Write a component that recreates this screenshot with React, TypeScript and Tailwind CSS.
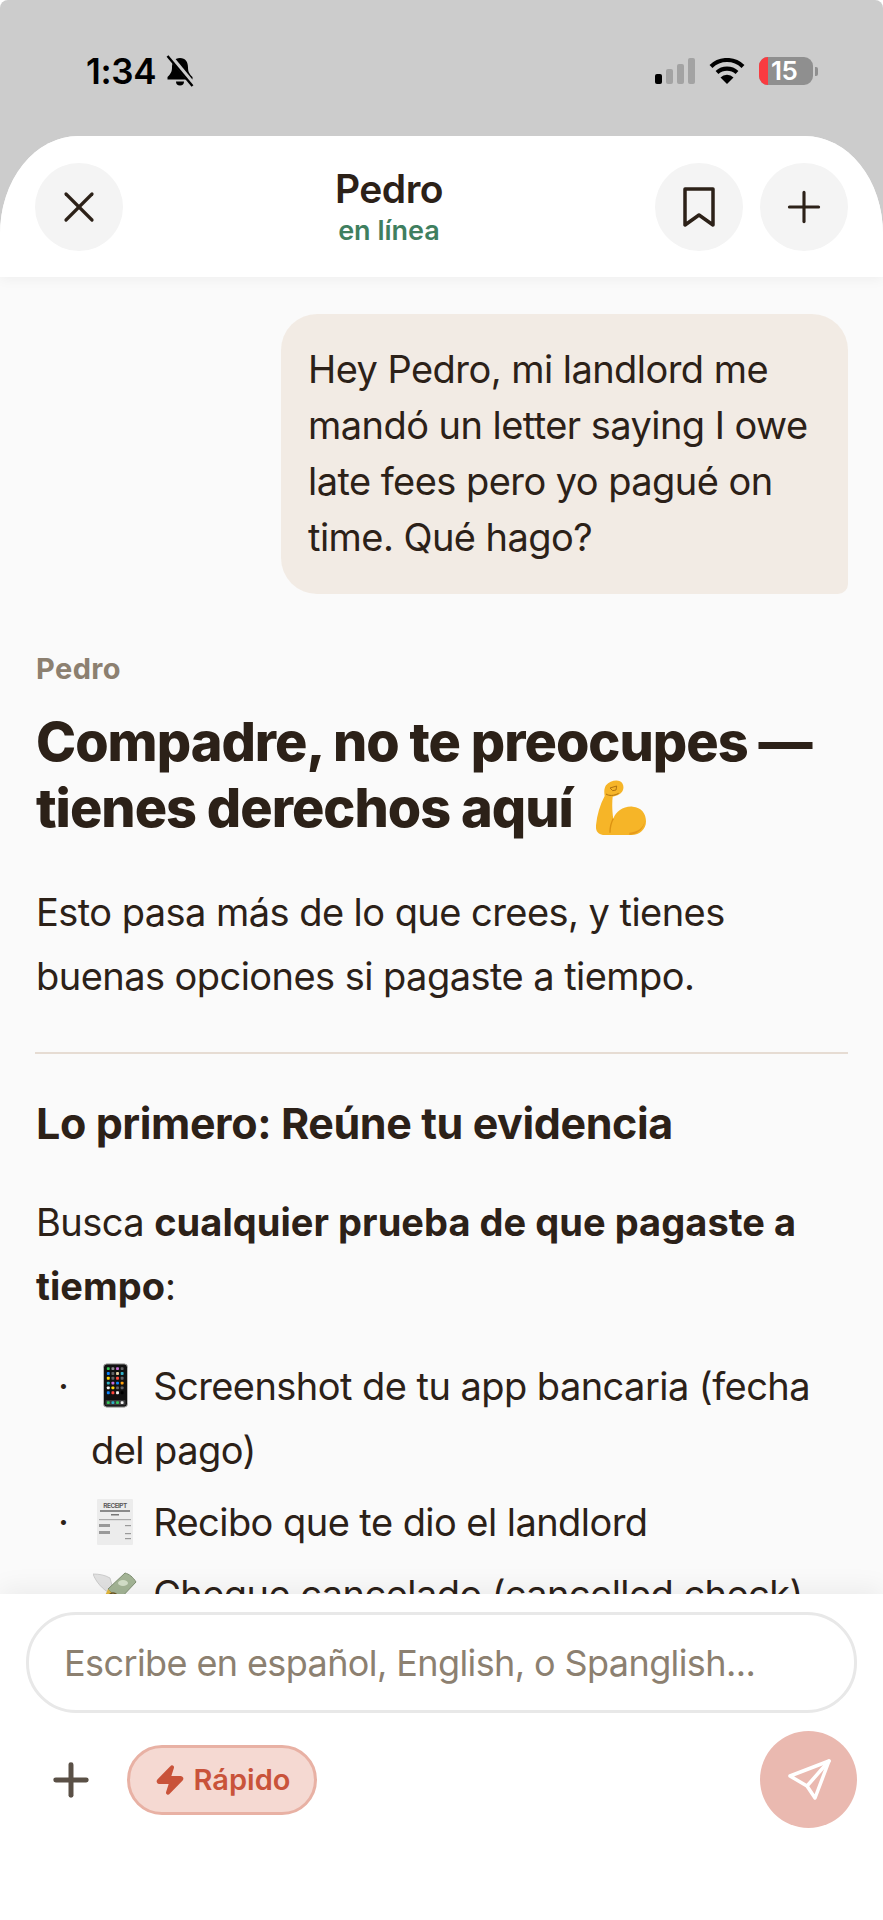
import { Plus, X, Zap } from 'lucide-react'

const sans = 'font-["Inter",sans-serif]'

function SilentBell() {
  return (
    <svg width="30" height="32" viewBox="0 0 30 32" className="ml-[9px]">
      <path d="M15 3c-5.500 0-8 4-8 9.500 0 4.500-1.500 6.500-4.500 9.500v2.500h25V22c-3-3-4.500-5-4.500-9.500C23 7 20.500 3 15 3z" fill="#000" />
      <path d="M11 26.500a4 4 0 0 0 8 0z" fill="#000" />
      <path d="M4 0l24 29" stroke="#ccc" strokeWidth="5" />
      <path d="M2.500 1l25 30" stroke="#000" strokeWidth="2.400" />
    </svg>
  )
}

function Signal() {
  return (
    <div className="flex items-end gap-[4px]">
      <div className="h-[10px] w-[7px] rounded-[2px] bg-black" />
      <div className="h-[15px] w-[7px] rounded-[2px] bg-[#a3a3a3]" />
      <div className="h-[20px] w-[7px] rounded-[2px] bg-[#a3a3a3]" />
      <div className="h-[26px] w-[7px] rounded-[2px] bg-[#a3a3a3]" />
    </div>
  )
}

function Wifi() {
  return (
    <svg width="36" height="26" viewBox="0 0 36 26">
      <path d="M2 8.500a23 23 0 0 1 32 0" fill="none" stroke="#000" strokeWidth="4.200" />
      <path d="M8 14.500a15 15 0 0 1 20 0" fill="none" stroke="#000" strokeWidth="4.200" />
      <path d="M18 26l-6.500-6.500a9 9 0 0 1 13 0z" fill="#000" />
    </svg>
  )
}

function Battery() {
  return (
    <div className="flex items-center">
      <div className="flex h-[28px] w-[54px] items-center rounded-[9px] bg-[#8f8f8f]">
        <div className="h-full w-[9px] rounded-l-[9px] bg-[#fa3b40]" />
        <span className={`${sans} ml-[3px] text-[26px] font-semibold leading-none tracking-[-0.5px] text-white`}>15</span>
      </div>
      <div className="ml-[2px] h-[9px] w-[3px] rounded-r-[2px] bg-[#8f8f8f]" />
    </div>
  )
}

function RoundButton({ children }: { children: React.ReactNode }) {
  return <button className="flex h-[88px] w-[88px] items-center justify-center rounded-full bg-[#f4f4f4]">{children}</button>
}

function BookmarkIcon() {
  return (
    <svg width="50" height="50" viewBox="0 0 50 50" fill="none" stroke="currentColor" strokeWidth="3.500" strokeLinejoin="round">
      <path d="M11 7h28v36L25 33 11 43z" />
    </svg>
  )
}

function Muscle() {
  return (
    <svg width="50" height="55" viewBox="0 0 150 165" className="ml-[12px] inline-block align-[-8px]">
      <path
        d="M30 16C40 4 60-2 72 4c10 5 13 18 8 28-4 9-16 15-30 18-2 18-2 42 2 66 8-22 30-38 58-36 26 2 40 20 40 44 0 24-18 41-44 41H26C8 165-2 154 0 136c3-32 12-62 26-88-2-12-2-22 4-32z"
        fill="#f6b528"
      />
      <path d="M52 116c-8 14-10 28-10 42" fill="none" stroke="#dc9312" strokeWidth="4" />
      <path d="M100 158c26-2 42-14 46-34-2 22-18 38-46 41z" fill="#e69a1c" />
      <path d="M42 24l20-6-2 12-10 2zM30 42c8 6 24 6 38-2" fill="none" stroke="#b07210" strokeWidth="3" />
    </svg>
  )
}

function PhoneEmoji() {
  const colors = ['#34c759', '#8e8e93', '#c86dd7', '#636366', '#0a84ff', '#636366', '#e5d3a5', '#30b0c7', '#ffd60a', '#636366', '#ff453a', '#636366', '#30b0c7', '#c86dd7', '#0a84ff', '#ff9f0a', '#f2f2f2', '#ffd60a', '#636366', '#636366', '#0a84ff', '#ff453a', '#f2f2f2', '#000']
  return (
    <svg width="25" height="45" viewBox="0 0 26 46" className="ml-[12px] mr-[11px] inline-block align-[-8px]">
      <rect x="0.500" y="0.500" width="25" height="45" rx="3.500" fill="#111" stroke="#b9b9b9" />
      {colors.map((c, i) => (
        <rect key={i} x={4 + (i % 4) * 4.800} y={4 + Math.floor(i / 4) * 5} width="3" height="3" rx="0.800" fill={c} />
      ))}
      <rect x="2.500" y="38" width="21" height="5.500" rx="1" fill="#3a3a3c" />
      <rect x="4" y="39.300" width="3" height="3" rx="0.800" fill="#34c759" />
      <rect x="8.800" y="39.300" width="3" height="3" rx="0.800" fill="#30b0c7" />
      <rect x="13.600" y="39.300" width="3" height="3" rx="0.800" fill="#34c759" />
      <rect x="18.400" y="39.300" width="3" height="3" rx="0.800" fill="#f2f2f2" />
    </svg>
  )
}

function ReceiptEmoji() {
  return (
    <svg width="36" height="46" viewBox="0 0 36 46" className="mx-[6px] inline-block align-[-9px]">
      <rect width="36" height="46" rx="1" fill="#ececec" />
      <text x="18" y="9" textAnchor="middle" fontSize="6.500" fontWeight="600" fill="#555">RECEIPT</text>
      <rect x="3" y="11" width="30" height="2" fill="#8a8a8a" />
      <rect x="14" y="15" width="8" height="1.500" fill="#777" />
      <rect x="2" y="20" width="32" height="1.200" fill="#aaa" />
      <rect x="2" y="25" width="11" height="3" fill="#999" />
      <rect x="28" y="26" width="6" height="1.200" fill="#999" />
      <rect x="2" y="32" width="11" height="3" fill="#999" />
      <rect x="28" y="34" width="6" height="1.200" fill="#999" />
      <rect x="28" y="39" width="6" height="1.200" fill="#999" />
    </svg>
  )
}

function MoneyEmoji() {
  return (
    <svg width="44" height="46" viewBox="0 0 44 46" className="mx-[2px] inline-block align-[-10px]">
      <path d="M0 2c6 0 12 1 17 4l3 11-3 4C10 18 3 10 0 2z" fill="#e2e2e2" stroke="#c4c4c4" strokeWidth="0.800" />
      <path d="M15 17L32 1c4 1 8 4 11 9L26 28z" fill="#a4b596" stroke="#7f8f72" strokeWidth="1" />
      <ellipse cx="30" cy="11" rx="5" ry="3" fill="#d5e0c9" />
      <path d="M15 17l13 14-4 8-13-13z" fill="#e2b93f" />
      <circle cx="20" cy="26" r="5" fill="#f1e5b5" stroke="#6b5420" strokeWidth="1.500" />
    </svg>
  )
}

function SendPlane() {
  return (
    <svg width="48" height="48" viewBox="0 0 48 48" fill="none" stroke="#fff" strokeWidth="3.500" strokeLinejoin="round" strokeLinecap="round">
      <path d="M44 5L5 20l17 10 8 12z" />
      <path d="M44 5L22 30" />
    </svg>
  )
}

export default function App() {
  return (
    <div className={`${sans} flex h-[1920px] w-[883px] flex-col overflow-hidden rounded-t-[8px] bg-[#cccccc] text-[#2c2118]`}>
      <div className="flex h-[136px] shrink-0 items-start justify-between pl-[86px] pr-[65px] pt-[50px]">
        <div className="flex items-center">
          <span className="text-[35px] font-semibold leading-[42px] tracking-[-0.3px] text-black">1:34</span>
          <SilentBell />
        </div>
        <div className="mt-[7px] flex items-center gap-[14px]">
          <Signal />
          <Wifi />
          <Battery />
        </div>
      </div>

      <div className="flex min-h-0 flex-1 flex-col overflow-hidden rounded-tl-[78px_98px] rounded-tr-[78px_98px] bg-[#fafafa]">
        <header className="z-10 flex h-[141px] shrink-0 items-start justify-between bg-white px-[35px] pt-[27px] shadow-[0_2px_12px_rgba(0,0,0,0.05)]">
          <RoundButton>
            <X size={52} strokeWidth={1.500} />
          </RoundButton>
          <div className="flex flex-col items-center pt-[4px]">
            <span className="text-[39px] font-semibold leading-[44px] tracking-[-0.5px]">Pedro</span>
            <span className="mt-[4px] text-[27px] font-semibold leading-[32px] text-[#3f7f5f]">en línea</span>
          </div>
          <div className="flex gap-[17px]">
            <RoundButton>
              <BookmarkIcon />
            </RoundButton>
            <RoundButton>
              <Plus size={50} strokeWidth={1.500} />
            </RoundButton>
          </div>
        </header>

        <main className="min-h-0 flex-1 overflow-hidden pl-[36px] pr-[35px] pt-[37px]">
          <div className="ml-auto w-[567px] rounded-[36px] rounded-br-[10px] bg-[#f2ebe4] px-[27px] pb-[29px] pt-[27px] text-[38px] leading-[56px] tracking-[-0.55px]">
            Hey Pedro, mi landlord me mandó un letter saying I owe late fees pero yo pagué on time. Qué hago?
          </div>

          <p className="mt-[59px] text-[29px] font-bold leading-[32px] tracking-[0.4px] text-[#8c8070]">Pedro</p>
          <h1 className="mt-[24px] text-[54px] font-extrabold leading-[66px] tracking-[-1px]">
            Compadre, no te preocupes — tienes derechos aquí <Muscle />
          </h1>
          <p className="mt-[39px] text-[38px] leading-[64px] tracking-[-0.55px]">Esto pasa más de lo que crees, y tienes buenas opciones si pagaste a tiempo.</p>
          <hr className="-ml-[1px] mt-[44px] border-t-2 border-[#e6dcd3]" />
          <h2 className="mt-[43px] text-[43px] font-bold leading-[52px] tracking-[-0.4px]">Lo primero: Reúne tu evidencia</h2>
          <p className="mt-[41px] text-[38px] leading-[64px] tracking-[-0.55px]">
            Busca <strong className="font-bold tracking-[0.05px]">cualquier prueba de que pagaste a tiempo</strong>:
          </p>
          <ul className="mt-[36px] flex flex-col gap-[8px] text-[38px] leading-[64px] tracking-[-0.55px]">
            <li className="relative pl-[55px]">
              <span className="absolute left-[22px] top-0">·</span>
              <PhoneEmoji /> <span className="ml-[4px]">Screenshot de tu app bancaria (fecha del pago)</span>
            </li>
            <li className="relative pl-[55px]">
              <span className="absolute left-[22px] top-0">·</span>
              <ReceiptEmoji /> <span className="ml-[4px]">Recibo que te dio el landlord</span>
            </li>
            <li className="relative pl-[55px]">
              <MoneyEmoji /> <span className="ml-[4px]">Cheque cancelado (cancelled check)</span>
            </li>
          </ul>
        </main>

        <footer className="z-10 h-[326px] shrink-0 bg-white px-[26px] pt-[18px] shadow-[0_-6px_24px_rgba(0,0,0,0.06)]">
          <input
            readOnly
            placeholder="Escribe en español, English, o Spanglish..."
            className="h-[101px] w-full rounded-[50px] border-[3px] border-[#e8e8e8] bg-white px-[35px] text-[36px] tracking-[-0.6px] placeholder:text-[#8c8070]"
          />
          <div className="mt-[18px] flex items-center justify-between">
            <div className="flex items-center gap-[30px] pl-[19px]">
              <Plus size={52} strokeWidth={2.300} className="text-[#5a5046]" />
              <div className="flex h-[70px] w-[190px] items-center justify-center gap-[8px] rounded-full border-[3px] border-[#e8b1a4] bg-[#f5d9d2] text-[29px] font-semibold text-[#c9533a]">
                <Zap size={32} fill="currentColor" strokeWidth={2} />
                Rápido
              </div>
            </div>
            <button className="flex h-[97px] w-[97px] items-center justify-center rounded-full bg-[#eab9b0]">
              <SendPlane />
            </button>
          </div>
        </footer>
      </div>
    </div>
  )
}
